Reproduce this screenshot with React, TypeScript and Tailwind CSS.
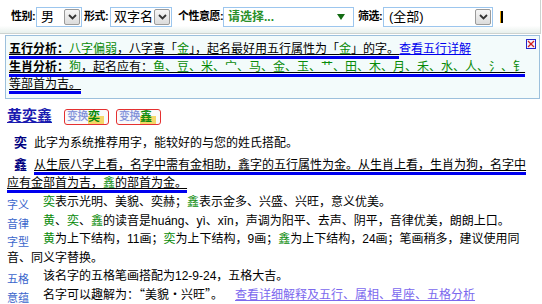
import React from "react";

const G = ({ children }: { children: React.ReactNode }) => (
  <span className="text-[#088a08]">{children}</span>
);

const Chevron = () => (
  <svg width="9" height="6" viewBox="0 0 9 6">
    <polyline points="1,1 4.5,4.5 8,1" fill="none" stroke="#333" strokeWidth="1.8" />
  </svg>
);

const DropBtn = () => (
  <span className="ml-auto mr-[1px] flex h-[16px] w-[16px] items-center justify-center rounded-[2px] border border-[#9a9a9a] bg-[linear-gradient(to_bottom,#f6f6f6,#dcdcdc)]">
    <Chevron />
  </span>
);

const Select = ({ text, w, pl }: { text: string; w: string; pl: string }) => (
  <div className={`flex h-[20px] ${w} items-center border border-[#9cc6ee] bg-white ${pl} text-[13px] text-black`}>
    <span className="whitespace-nowrap">{text}</span>
    <DropBtn />
  </div>
);

const Label = ({ children, w }: { children: React.ReactNode; w: string }) => (
  <span className={`${w} whitespace-nowrap text-[11px] font-bold tracking-[-0.5px] text-black`}>{children}</span>
);

const SwapBtn = ({ ch }: { ch: string }) => (
  <span className="flex h-[16px] w-[45px] items-center rounded-[3px] border border-[#e53030] bg-[#fafafa] pl-[2px]">
    <span className="text-[11px] leading-none tracking-[-0.5px] text-[#7d8ed8] [text-shadow:0_0_1px_#b8c2f0]">变换</span>
    <span className="bg-[linear-gradient(transparent_40%,#f3d868_40%)] pr-[4px] text-[12px] font-bold leading-[14px] text-[#0a8a0a]">
      {ch}
    </span>
  </span>
);

const RowLabel = ({ children }: { children: React.ReactNode }) => (
  <span className="inline-block w-[36px] align-[-3px] text-[11px] leading-[12px] text-[#3a66cc]">{children}</span>
);

export default function App() {
  return (
    <div className="w-[542px] h-[304px] overflow-hidden bg-white font-['Liberation_Sans','Noto_Sans_CJK_SC',sans-serif] text-[12px] text-black">
      {/* top filter bar */}
      <div className="flex h-[34px] w-[541px] items-center border-b border-r border-[#cdd3d0] bg-[linear-gradient(to_bottom,#ffffff_78%,#e8f0ec)] pl-[11px]">
        <Label w="w-[25px]">性别:</Label>
        <Select text="男" w="w-[46px]" pl="pl-[4px]" />
        <span className="w-[2px]" />
        <Label w="w-[26px]">形式:</Label>
        <Select text="双字名" w="w-[62px]" pl="pl-[3px]" />
        <span className="w-[6px]" />
        <Label w="w-[45px]">个性意愿:</Label>
        <div className="flex h-[20px] w-[131px] items-center border border-[#9cc6ee] bg-white pl-[4px]">
          <span className="text-[12px] font-bold text-[#2a8f2a]">请选择...</span>
          <svg className="ml-auto mr-[8px]" width="8" height="6" viewBox="0 0 8 6">
            <polygon points="0,0 8,0 4,6" fill="#136b13" />
          </svg>
        </div>
        <span className="w-[4px]" />
        <Label w="w-[25px]">筛选:</Label>
        <Select text="(全部)" w="w-[110px]" pl="pl-[5px]" />
        <span className="ml-[7px] flex h-[12px]">
          <span className="w-[1px] bg-[#f0a800]" />
          <span className="w-[2px] bg-black" />
        </span>
      </div>

      {/* analysis box */}
      <div className="relative ml-[5px] mt-[1px] w-[535px] border border-[#9cc0dc] bg-[#f3fbfb] pb-[4px] pl-[3px] pr-[4px] pt-[5px] leading-[17.5px]">
        <div>
          <span className="border-b-[3px] border-[#0000ee] underline">
            <b>五行分析：</b>
            <G>八字偏弱</G>，八字喜「<G>金</G>」，起名最好用五行属性为「<G>金</G>」的字。
          </span>
          <span className="text-[#0000ee] underline">查看五行详解</span>
        </div>
        <div>
          <span className="border-b-[3px] border-[#0000ee] underline">
            <b>生肖分析：</b>
            <G>狗</G>，起名应有：<G>鱼、豆、米、宀、马、金、玉、艹、田、木、月、禾、水、人、氵、钅</G>等部首为吉。
          </span>
        </div>
        <svg className="absolute right-[3px] top-[3px]" width="10" height="10" viewBox="0 0 10 10">
          <rect x="0.5" y="0.5" width="9" height="9" fill="#f4f4ff" stroke="#2424c8" />
          <line x1="2" y1="2" x2="8" y2="8" stroke="#d02020" strokeWidth="1.3" />
          <line x1="8" y1="2" x2="2" y2="8" stroke="#d02020" strokeWidth="1.3" />
        </svg>
      </div>

      {/* result */}
      <div className="pl-[7px] pr-[12px]">
        <div className="mt-[8px] flex h-[20px] items-center">
          <span className="text-[15px] font-bold text-[#1a1ab0] underline">黄奕鑫</span>
          <span className="w-[12px]" />
          <SwapBtn ch="奕" />
          <span className="w-[7px]" />
          <SwapBtn ch="鑫" />
        </div>

        <div className="mt-[7px] leading-[18.3px]">
          <span className="inline-block w-[27px] pl-[7px] text-[13px] font-bold text-[#000080]">奕</span>
          此字为系统推荐用字，能较好的与您的姓氏搭配。
        </div>

        <div className="mt-[4px] leading-[18.3px]">
          <span className="inline-block w-[27px] pl-[7px] text-[13px] font-bold text-[#000080]">鑫</span>
          <span className="border-b-[3px] border-[#0000ee] underline">
            从生辰八字上看，名字中需有金相助，鑫字的五行属性为金。从生肖上看，生肖为狗，名字中应有金部首为吉，<G>鑫</G>的部首为金。
          </span>
        </div>

        <div className="mt-[1px] leading-[18.4px]">
          <div>
            <RowLabel>字义</RowLabel>
            <G>奕</G>表示光明、美貌、奕赫；<G>鑫</G>表示金多、兴盛、兴旺，意义优美。
          </div>
          <div>
            <RowLabel>音律</RowLabel>
            <G>黄</G>、<G>奕</G>、<G>鑫</G>的读音是huáng、yì、xīn，声调为阳平、去声、阴平，音律优美，朗朗上口。
          </div>
          <div>
            <RowLabel>字型</RowLabel>
            <G>黄</G>为上下结构，11画；<G>奕</G>为上下结构，9画；<G>鑫</G>为上下结构，24画；笔画稍多，建议使用同音、同义字替换。
          </div>
          <div>
            <RowLabel>五格</RowLabel>
            该名字的五格笔画搭配为12-9-24，五格大吉。
          </div>
          <div className="whitespace-nowrap">
            <RowLabel>意蕴</RowLabel>
            名字可以趣解为：<span className="font-['Noto_Sans_CJK_SC',sans-serif]">“美貌•兴旺”。</span>
            <span className="ml-[12px] text-[#7b68ee] underline">查看详细解释及五行、属相、星座、五格分析</span>
          </div>
        </div>
      </div>
    </div>
  );
}
